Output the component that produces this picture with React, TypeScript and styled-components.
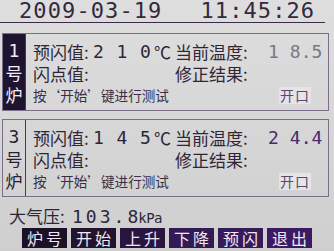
import React from "react";
import styled, { createGlobalStyle } from "styled-components";

const Global = createGlobalStyle`
  html, body { margin: 0; padding: 0; }
  body {
    width: 334px; height: 251px; overflow: hidden;
    background: linear-gradient(#dedede, #cfcfcf);
    font-family: "Noto Sans CJK SC", "Noto Sans", sans-serif;
    color: #2e2638;
  }
`;

const Screen = styled.div`
  width: 334px;
  height: 251px;
  display: flex;
  flex-direction: column;
`;

const Header = styled.div`
  width: 325px;
  height: 23px;
  border-bottom: 1px solid #3a2a4a;
  display: flex;
  align-items: flex-start;
  box-sizing: border-box;
  padding-left: 19px;
  gap: 38px;
  font-family: "DejaVu Sans Mono", monospace;
  font-size: 22px;
  line-height: 22px;
  letter-spacing: 1.1px;
  color: #33293f;
`;

const Panel = styled.div<{ $top: number }>`
  margin: ${(p) => p.$top}px 0 0 2px;
  width: 327px;
  height: 78px;
  box-sizing: border-box;
  border: 1px solid #7c6e88;
  display: flex;
`;

const Label = styled.div<{ $dark?: boolean }>`
  width: 23px;
  box-sizing: border-box;
  border-right: 1px solid #4a3a5a;
  background: ${(p) => (p.$dark ? "#1f1430" : "transparent")};
  color: ${(p) => (p.$dark ? "#f2eef6" : "#2a2036")};
  display: flex;
  flex-direction: column;
  align-items: center;
  padding-top: 6px;
  font-size: 17px;
  line-height: 22px;
`;

const LabelChar = styled.span`
  height: 22px;
`;

const Num = styled.span`
  height: 22px;
  font-family: "DejaVu Sans Mono", monospace;
  font-size: 18px;
`;

const Body = styled.div`
  flex: 1;
  display: flex;
  flex-direction: column;
  padding: 6px 0 0 7px;
`;

const Row = styled.div`
  display: flex;
  align-items: center;
  height: 22px;
  font-size: 17px;
  white-space: nowrap;
`;

const Left = styled.div`
  width: 142px;
  display: flex;
  align-items: center;
`;

const Key = styled.span<{ $w: number }>`
  width: ${(p) => p.$w}px;
  flex: none;
`;

const Digits = styled.span<{ $tone?: string; $gap: number; $after?: number }>`
  display: inline-flex;
  gap: ${(p) => p.$gap}px;
  margin-right: ${(p) => p.$after ?? 0}px;
  font-family: "DejaVu Sans Mono", monospace;
  font-size: 18px;
  color: ${(p) => p.$tone || "#2e2638"};
`;

const Hint = styled.div`
  width: 246px;
  font-size: 13.6px;
  color: #3a2f46;
`;

const Badge = styled.div`
  width: 32px;
  height: 17px;
  background: #e6e4e8;
  color: #5a4a6a;
  font-size: 14px;
  line-height: 17px;
  text-align: center;
  letter-spacing: 1px;
`;

const Pressure = styled.div`
  display: flex;
  align-items: baseline;
  height: 22px;
  margin-top: 6px;
  padding-left: 9px;
  font-size: 17px;
`;

const Unit = styled.span`
  font-family: "DejaVu Sans Mono", monospace;
  font-size: 14px;
  letter-spacing: -0.5px;
`;

const Buttons = styled.div`
  display: flex;
  gap: 4px;
  margin-top: 3px;
  padding-left: 22px;
`;

const Btn = styled.div<{ $bg: string }>`
  width: 45px;
  height: 20px;
  background: ${(p) => p.$bg};
  color: #eee8f4;
  font-size: 16px;
  line-height: 20px;
  text-align: center;
  letter-spacing: 3px;
  text-indent: 3px;
`;

const Chars = ({ s }: { s: string }) => (
  <>
    {s.split("").map((c, i) => (
      <span key={i}>{c}</span>
    ))}
  </>
);

const furnaces = [
  { id: "1", dark: true, pre: "210", t1: "1", t2: "8.5", tone: "#7c7682" },
  { id: "3", dark: false, pre: "145", t1: "2", t2: "4.4", tone: "#4a2a6a" },
];

const buttons = [
  { t: "炉号", bg: "#1c1228" },
  { t: "开始", bg: "#22142e" },
  { t: "上升", bg: "#2a1540" },
  { t: "下降", bg: "#331a55" },
  { t: "预闪", bg: "#361a5a" },
  { t: "退出", bg: "#3a1a62" },
];

export default function App() {
  return (
    <Screen>
      <Global />
      <Header>
        <span>2009-03-19</span>
        <span>11:45:26</span>
      </Header>
      {furnaces.map((f, i) => (
        <Panel key={f.id} $top={i === 0 ? 10 : 8}>
          <Label $dark={f.dark}>
            <Num>{f.id}</Num>
            <LabelChar>号</LabelChar>
            <LabelChar>炉</LabelChar>
          </Label>
          <Body>
            <Row>
              <Left>
                <Key $w={60}>预闪值:</Key>
                <Digits $gap={12.7} $after={3}>
                  <Chars s={f.pre} />
                </Digits>
                ℃
              </Left>
              <Key $w={93}>当前温度:</Key>
              <Digits $gap={11} $tone={f.tone}>
                <span>{f.t1}</span>
                <Digits $gap={-2} $tone={f.tone}>
                  <Chars s={f.t2} />
                </Digits>
              </Digits>
            </Row>
            <Row>
              <Left>闪点值:</Left>
              修正结果:
            </Row>
            <Row>
              <Hint>按‘开始’键进行测试</Hint>
              <Badge>开口</Badge>
            </Row>
          </Body>
        </Panel>
      ))}
      <Pressure>
        <Key $w={63}>大气压:</Key>
        <Digits $gap={3} $after={0}>
          <Chars s="103.8" />
        </Digits>
        <Unit>kPa</Unit>
      </Pressure>
      <Buttons>
        {buttons.map((b) => (
          <Btn key={b.t} $bg={b.bg}>{b.t}</Btn>
        ))}
      </Buttons>
    </Screen>
  );
}
